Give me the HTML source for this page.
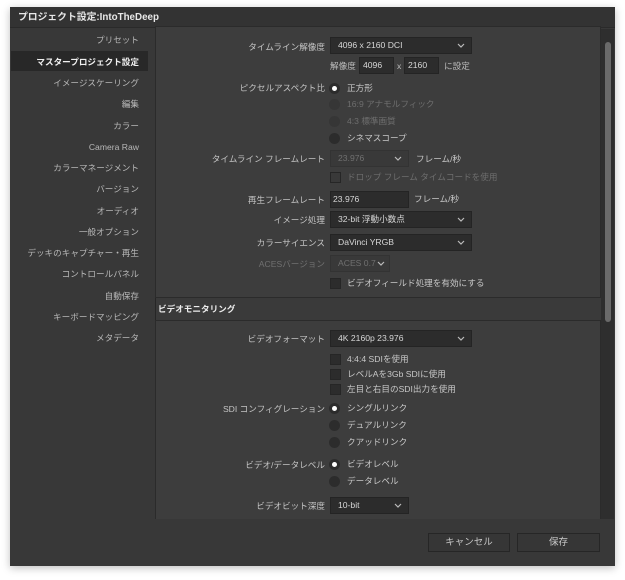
<!DOCTYPE html>
<html><head><meta charset="utf-8"><style>
*{margin:0;padding:0;box-sizing:border-box}
body{width:625px;height:580px;background:#fff;position:relative;overflow:hidden;font-family:"Liberation Sans","Noto Sans CJK JP",sans-serif;font-size:8.6px;color:#bdbdbd}
.a{position:absolute;white-space:nowrap}
#win{position:absolute;left:10px;top:7px;width:605px;height:559px;background:#383838;box-shadow:0 2px 8px rgba(0,0,0,.25)}
#title{position:absolute;left:10px;top:7px;width:605px;height:21px;background:#333;border-bottom:1px solid #2a2a2a;color:#e8e8e8;font-weight:bold;font-size:9.8px;line-height:21px;padding-left:8px}
.side{position:absolute;right:486px;text-align:right;color:#b8b8b8;line-height:12px}
.box{position:absolute;left:155px;width:446px;background:#3d3d3d;border:1px solid #2b2b2b}
.lab{position:absolute;right:300px;text-align:right;line-height:12px;color:#c4c4c4}
.dd{position:absolute;left:330px;height:17px;background:#2c2c2c;border:1px solid #242424;color:#d8d8d8;line-height:15px;padding-left:7px;white-space:nowrap}
.dd svg{position:absolute;right:6px;top:5px}
.rad{position:absolute;left:329px;width:11px;height:11px;border-radius:50%;background:#2c2c2c}
.rad.on::after{content:"";position:absolute;left:3px;top:3px;width:5px;height:5px;border-radius:50%;background:#fff}
.rad.dim{background:#363636}
.cb{position:absolute;left:330px;width:11px;height:11px;background:#2c2c2c;border:1px solid #262626}
.cb.dim{background:#393939}
.t{position:absolute;left:347px;line-height:12px;color:#c8c8c8;white-space:nowrap}
.btn{position:absolute;top:533px;height:19px;border:1px solid #262626;background:#363636;color:#c8c8c8;text-align:center;line-height:17px;font-size:9.5px}
</style></head><body>
<div id="win"></div>
<div id="title">プロジェクト設定:IntoTheDeep</div>
<div class="a" style="left:155px;top:29px;width:1px;height:490px;background:#262626"></div>
<div class="a" style="left:11px;top:51px;width:137px;height:20px;background:#282828"></div>
<div class="side" style="top:34px">プリセット</div>
<div class="side" style="top:56px;color:#f0f0f0;font-weight:bold">マスタープロジェクト設定</div>
<div class="side" style="top:77px">イメージスケーリング</div>
<div class="side" style="top:98px">編集</div>
<div class="side" style="top:120px">カラー</div>
<div class="side" style="top:141px">Camera Raw</div>
<div class="side" style="top:162px">カラーマネージメント</div>
<div class="side" style="top:183px">バージョン</div>
<div class="side" style="top:205px">オーディオ</div>
<div class="side" style="top:226px">一般オプション</div>
<div class="side" style="top:247px">デッキのキャプチャー・再生</div>
<div class="side" style="top:268px">コントロールパネル</div>
<div class="side" style="top:290px">自動保存</div>
<div class="side" style="top:311px">キーボードマッピング</div>
<div class="side" style="top:332px">メタデータ</div>

<div class="a" style="left:156px;top:29px;width:445px;height:490px;background:#3a3a3a"></div>
<div class="a" style="left:601px;top:29px;width:13px;height:490px;background:#2e2e2e"></div>
<div class="a" style="left:605px;top:42px;width:6px;height:280px;border-radius:3px;background:#6a6a6a"></div>
<div class="box" style="top:26px;height:272px"></div>
<div class="a" style="left:158px;top:303px;color:#ececec;font-weight:bold;line-height:12px">ビデオモニタリング</div>
<div class="box" style="top:320px;height:200px;border-bottom:none"></div>
<div class="a" style="left:10px;top:519px;width:605px;height:47px;background:#383838"></div>

<svg width="0" height="0" style="position:absolute"><defs><symbol id="ch" viewBox="0 0 8 5"><path d="M1 1l3 3 3-3" fill="none" stroke="#bbb" stroke-width="1.2"/></symbol></defs></svg>

<div class="lab" style="top:41px">タイムライン解像度</div>
<div class="dd" style="top:37px;width:142px">4096 x 2160 DCI<svg width="8" height="5"><use href="#ch"/></svg></div>
<div class="a" style="left:330px;top:60px;line-height:12px">解像度</div>
<div class="dd" style="left:359px;top:57px;width:35px;padding-left:3px">4096</div>
<div class="a" style="left:397px;top:60px;line-height:12px">x</div>
<div class="dd" style="left:404px;top:57px;width:35px;padding-left:3px">2160</div>
<div class="a" style="left:444px;top:60px;line-height:12px">に設定</div>

<div class="lab" style="top:82px">ピクセルアスペクト比</div>
<div class="rad on" style="top:83px"></div><div class="t" style="top:82px">正方形</div>
<div class="rad dim" style="top:99px"></div><div class="t" style="top:98px;color:#6e6e6e">16:9 アナモルフィック</div>
<div class="rad dim" style="top:116px"></div><div class="t" style="top:115px;color:#6e6e6e">4:3 標準画質</div>
<div class="rad" style="top:133px"></div><div class="t" style="top:132px">シネマスコープ</div>

<div class="lab" style="top:153px">タイムライン フレームレート</div>
<div class="dd" style="top:150px;width:79px;color:#707070;background:#393939;border-color:#333">23.976<svg width="8" height="5"><use href="#ch"/></svg></div>
<div class="a" style="left:416px;top:153px;line-height:12px;color:#c8c8c8">フレーム/秒</div>
<div class="cb dim" style="top:172px"></div><div class="t" style="top:171px;color:#6e6e6e">ドロップ フレーム タイムコードを使用</div>

<div class="lab" style="top:194px">再生フレームレート</div>
<div class="dd" style="top:191px;width:79px;padding-left:2px">23.976</div>
<div class="a" style="left:414px;top:193px;line-height:12px;color:#c8c8c8">フレーム/秒</div>

<div class="lab" style="top:214px">イメージ処理</div>
<div class="dd" style="top:211px;width:142px">32-bit 浮動小数点<svg width="8" height="5"><use href="#ch"/></svg></div>
<div class="lab" style="top:237px">カラーサイエンス</div>
<div class="dd" style="top:234px;width:142px">DaVinci YRGB<svg width="8" height="5"><use href="#ch"/></svg></div>
<div class="lab" style="top:258px;color:#707070">ACESバージョン</div>
<div class="dd" style="top:255px;width:60px;color:#707070;background:#393939;border-color:#333">ACES 0.7<svg width="8" height="5" style="right:4px"><use href="#ch"/></svg></div>
<div class="cb" style="top:278px"></div><div class="t" style="top:277px">ビデオフィールド処理を有効にする</div>

<div class="lab" style="top:333px">ビデオフォーマット</div>
<div class="dd" style="top:330px;width:142px">4K 2160p 23.976<svg width="8" height="5"><use href="#ch"/></svg></div>
<div class="cb" style="top:354px"></div><div class="t" style="top:353px">4:4:4 SDIを使用</div>
<div class="cb" style="top:369px"></div><div class="t" style="top:368px">レベルAを3Gb SDIに使用</div>
<div class="cb" style="top:384px"></div><div class="t" style="top:383px">左目と右目のSDI出力を使用</div>

<div class="lab" style="top:403px">SDI コンフィグレーション</div>
<div class="rad on" style="top:403px"></div><div class="t" style="top:402px">シングルリンク</div>
<div class="rad" style="top:420px"></div><div class="t" style="top:419px">デュアルリンク</div>
<div class="rad" style="top:437px"></div><div class="t" style="top:436px">クアッドリンク</div>

<div class="lab" style="top:459px">ビデオ/データレベル</div>
<div class="rad on" style="top:459px"></div><div class="t" style="top:458px">ビデオレベル</div>
<div class="rad" style="top:476px"></div><div class="t" style="top:475px">データレベル</div>

<div class="lab" style="top:500px">ビデオビット深度</div>
<div class="dd" style="top:497px;width:79px">10-bit<svg width="8" height="5"><use href="#ch"/></svg></div>

<div class="btn" style="left:428px;width:82px">キャンセル</div>
<div class="btn" style="left:517px;width:83px">保存</div>
</body></html>
